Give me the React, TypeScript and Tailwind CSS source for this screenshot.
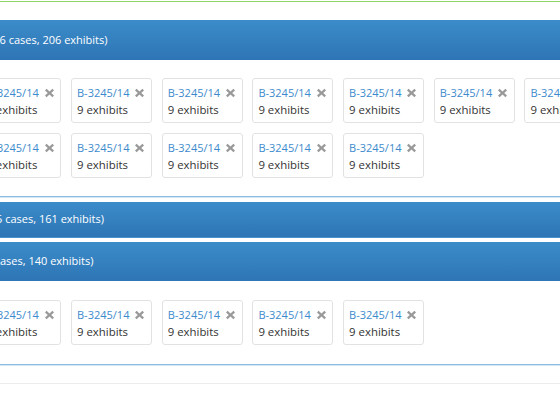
const font = { fontFamily: '"Open Sans", "DejaVu Sans", sans-serif' };

function RemoveIcon() {
  return (
    <svg width="11" height="10" viewBox="0 0 11 10" className="shrink-0">
      <path d="M1 2.4 2.6 0.8 5.5 3.5 8.4 0.8 10 2.4 7.2 5 10 7.6 8.4 9.2 5.5 6.5 2.6 9.2 1 7.6 3.8 5Z" fill="#999999" />
    </svg>
  );
}

function CaseCard() {
  return (
    <div className="w-[81px] h-[45px] shrink-0 mr-[9.7px] rounded-[3px] border border-[#e2e2e2] bg-white pl-[5px] pt-[5px] leading-[17px] text-[11px]">
      <div className="flex items-center gap-[5px] whitespace-nowrap">
        <span className="text-[#3d8bcd]">B-3245/14</span>
        <RemoveIcon />
      </div>
      <div className="text-[#333] whitespace-nowrap text-[11.4px]">9 exhibits</div>
    </div>
  );
}

function Row({ count }: { count: number }) {
  return (
    <div className="flex -ml-[19.7px]">
      {Array.from({ length: count }).map((_, i) => (
        <CaseCard key={i} />
      ))}
    </div>
  );
}

function Heading({ text, shift, height }: { text: string; shift: string; height: string }) {
  return (
    <div className={`flex items-center bg-linear-to-b from-[#3c8cca] to-[#2e75b5] text-white text-[11px] whitespace-nowrap ${height}`}>
      <span className={shift}>{text}</span>
    </div>
  );
}

export default function App() {
  return (
    <div className="w-[560px] h-[400px] overflow-hidden bg-white" style={font}>
      <div className="h-px" />
      <div className="h-px bg-[#8cd46a]" />
      <div className="mt-[18px]">
        <Heading text="(16 cases, 206 exhibits)" shift="-ml-[10px]" height="h-[40px]" />
        <div className="flex flex-col gap-[10px] py-[18px] border-b border-[#8fbbe0]">
          <Row count={8} />
          <Row count={5} />
        </div>
        <div className="h-px bg-[#d6e6f4]" />
      </div>
      <div className="mt-[4px] border-b border-[#4d93cf]">
        <Heading text="(15 cases, 161 exhibits)" shift="-ml-[13.5px]" height="h-[35px]" />
      </div>
      <div className="mt-[4px]">
        <Heading text="(14 cases, 140 exhibits)" shift="-ml-[24px]" height="h-[39px]" />
        <div className="py-[19px] border-b border-[#8fbbe0]">
          <Row count={5} />
        </div>
        <div className="h-px bg-[#d6e6f4]" />
      </div>
      <div className="mt-[17px] h-px bg-[#ececec]" />
    </div>
  );
}
